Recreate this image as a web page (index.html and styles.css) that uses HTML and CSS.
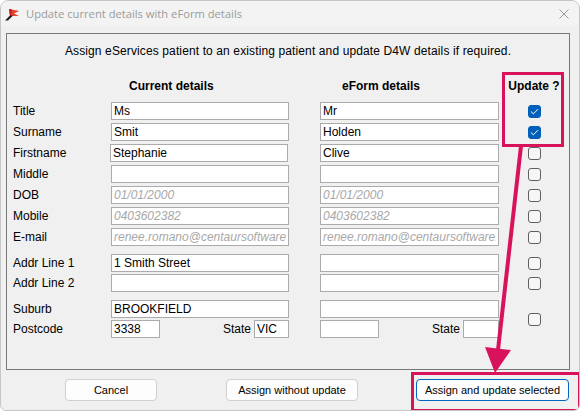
FILE: index.html
```html
<!DOCTYPE html>
<html lang="en">
<head>
    <meta charset="UTF-8">
    <title>Update current details with eForm details</title>
    <link rel="stylesheet" href="styles.css">
</head>
<body>
    <div class="window">
        <div class="titlebar">
            <svg class="appicon" width="16" height="16" viewBox="0 0 16 16">
                <polygon points="5,3 15,5 10,7.5 15,10 6,10" fill="#e8402a"/>
                <polygon points="5,3 8,3.6 7,10 6,10" fill="#c81e1e"/>
                <polygon points="1,14.5 6,9.5 9,9.5 4,14.5" fill="#1e1e1e"/>
            </svg>
            <span class="title">Update current details with eForm details</span>
            <svg class="close" width="10" height="10" viewBox="0 0 10 10">
                <path d="M0.5 0.5 L9.5 9.5 M9.5 0.5 L0.5 9.5" stroke="#9a9a9a" stroke-width="1"/>
            </svg>
        </div>

        <div class="group">
            <div class="intro">Assign eServices patient to an existing patient and update D4W details if required.</div>

            <div class="grid heads">
                <div class="cur head head-cur">Current details</div>
                <div class="ef head head-ef">eForm details</div>
                <div class="chk head">Update ?</div>
            </div>

            <div class="grid rows">
                <div class="lbl">Title</div>
                <input class="cur" value="Ms" readonly>
                <input class="ef" value="Mr" readonly>
                <span class="chk box checked"><svg width="9" height="7" viewBox="0 0 9 7"><path d="M1 3.6 L3.4 5.8 L8 1.2" fill="none" stroke="#fff" stroke-width="1"/></svg></span>

                <div class="lbl">Surname</div>
                <input class="cur" value="Smit" readonly>
                <input class="ef" value="Holden" readonly>
                <span class="chk box checked"><svg width="9" height="7" viewBox="0 0 9 7"><path d="M1 3.6 L3.4 5.8 L8 1.2" fill="none" stroke="#fff" stroke-width="1"/></svg></span>

                <div class="lbl">Firstname</div>
                <input class="cur shift" value="Stephanie" readonly>
                <input class="ef" value="Clive" readonly>
                <span class="chk box"></span>

                <div class="lbl">Middle</div>
                <input class="cur" value="" readonly>
                <input class="ef" value="" readonly>
                <span class="chk box"></span>

                <div class="lbl">DOB</div>
                <input class="cur off" value="01/01/2000" disabled>
                <input class="ef off" value="01/01/2000" disabled>
                <span class="chk box"></span>

                <div class="lbl">Mobile</div>
                <input class="cur off" value="0403602382" disabled>
                <input class="ef off" value="0403602382" disabled>
                <span class="chk box"></span>

                <div class="lbl">E-mail</div>
                <input class="cur off" value="renee.romano@centaursoftware.com" disabled>
                <input class="ef off" value="renee.romano@centaursoftware.com" disabled>
                <span class="chk box"></span>
            </div>

            <div class="grid rows tight">
                <div class="lbl">Addr Line 1</div>
                <input class="cur" value="1 Smith Street" readonly>
                <input class="ef" value="" readonly>
                <span class="chk box"></span>

                <div class="lbl">Addr Line 2</div>
                <input class="cur" value="" readonly>
                <input class="ef" value="" readonly>
                <span class="chk box"></span>
            </div>

            <div class="grid rows tight">
                <div class="lbl">Suburb</div>
                <input class="cur" value="BROOKFIELD" readonly>
                <input class="ef" value="" readonly>
                <span class="chk box span2"></span>

                <div class="lbl">Postcode</div>
                <div class="cur split">
                    <input class="pc-cur" value="3338" readonly>
                    <span class="state"><span>State</span><input class="st-cur" value="VIC" readonly></span>
                </div>
                <div class="ef split">
                    <input class="pc-ef" value="" readonly>
                    <span class="state"><span>State</span><input class="st-ef" value="" readonly></span>
                </div>
            </div>
        </div>

        <div class="buttons">
            <button class="btn btn-cancel">Cancel</button>
            <button class="btn btn-plain">Assign without update</button>
            <button class="btn btn-default">Assign and update selected</button>
        </div>

        <!-- annotation overlay -->
        <div class="mark mark-update"></div>
        <div class="mark mark-button"></div>
        <svg class="arrow" width="580" height="411" viewBox="0 0 580 411">
            <line x1="521" y1="146" x2="498" y2="350" stroke="#d8135c" stroke-width="4"/>
            <polygon points="485,347 511,350 495,373" fill="#d8135c"/>
        </svg>
    </div>
</body>
</html>
```

FILE: styles.css
```css
* {
    box-sizing: border-box;
}
body {
    margin: 0;
    font-family: "Liberation Sans", Arial, sans-serif;
    font-size: 12px;
    color: #000;
    background: #fff;
}
.window {
    position: relative;
    width: 580px;
    height: 411px;
    background-color: #f0f0f0;
    border: 1px solid #c6c6c6;
    border-radius: 8px 8px 6px 6px;
    overflow: hidden;
}
.titlebar {
    display: flex;
    align-items: center;
    height: 25px;
    padding: 0 0 0 3px;
    background-color: #f3f3f3;
}
.appicon {
    margin-top: 1px;
}
.title {
    margin-left: 6px;
    color: #9b9b9b;
    font-family: "Open Sans", "Liberation Sans", sans-serif;
    font-size: 11.2px;
}
.close {
    margin-left: auto;
    margin-right: 10px;
}
.group {
    margin: 7px 0 0 5px;
    width: 564px;
    border: 1px solid #787878;
    padding: 10px 0 31px 6px;
}
.intro {
    text-align: center;
    line-height: 14px;
    padding-right: 6px;
    letter-spacing: 0.12px;
}
.grid {
    display: grid;
    grid-template-columns: 98px 178px 31px 179px 1fr;
}
.heads {
    margin-top: 21px;
    height: 14px;
    line-height: 14px;
}
.head {
    font-weight: bold;
}
.head-cur {
    padding-left: 18px;
}
.head-ef {
    padding-left: 22px;
}
.rows {
    margin-top: 9px;
    grid-auto-rows: 18px;
    row-gap: 3px;
    align-items: center;
}
.rows.tight {
    margin-top: 8px;
    row-gap: 2px;
}
.lbl {
    grid-column: 1;
    line-height: 14px;
}
.cur {
    grid-column: 2;
}
.ef {
    grid-column: 4;
}
.chk {
    grid-column: 5;
    justify-self: center;
    text-align: center;
}
input {
    display: block;
    width: 100%;
    height: 18px;
    margin: 0;
    padding: 0 2px;
    border: 1px solid #ababab;
    border-radius: 0;
    background: #fff;
    font-family: "Liberation Sans", Arial, sans-serif;
    font-size: 12px;
    color: #000;
    outline: none;
}
input.shift {
    margin-left: -1px;
}
input.off {
    color: #a8a8a8;
    font-style: italic;
    background: #fff;
}
.box {
    width: 13px;
    height: 13px;
    border: 1px solid #5f5f5f;
    border-radius: 3px;
    background: #f6f6f6;
    display: flex;
    align-items: center;
    justify-content: center;
}
.box.checked {
    border-color: #005fb8;
    background: #005fb8;
}
.box.span2 {
    grid-row: span 2;
}
.split {
    display: flex;
    justify-content: space-between;
    align-items: center;
    height: 18px;
}
.state {
    display: flex;
    align-items: center;
    gap: 3px;
}
.pc-cur {
    width: 49px;
}
.st-cur {
    width: 35px;
}
.pc-ef {
    width: 59px;
}
.st-ef {
    width: 36px;
}
.buttons {
    display: flex;
    padding: 9px 0 0 64px;
}
.btn {
    height: 22px;
    padding: 0;
    background: #fdfdfd;
    border: 1px solid #d0d0d0;
    border-radius: 4px;
    font-family: "Liberation Sans", Arial, sans-serif;
    font-size: 11px;
    color: #000;
}
.btn-cancel {
    width: 92px;
}
.btn-plain {
    width: 132px;
    margin-left: 69px;
}
.btn-default {
    width: 153px;
    margin-left: 58px;
    border-color: #0067c0;
}
.mark {
    position: absolute;
    border: 3px solid #d8135c;
}
.mark-update {
    left: 501px;
    top: 71px;
    width: 62px;
    height: 75px;
}
.mark-button {
    left: 410px;
    top: 371px;
    width: 170px;
    height: 40px;
}
.arrow {
    position: absolute;
    left: -1px;
    top: -1px;
}
```
